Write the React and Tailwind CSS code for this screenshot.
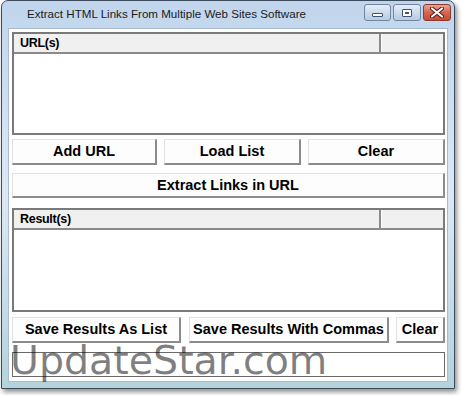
import React from 'react';

const btnFont = { fontFamily: '"Liberation Sans", Arial, sans-serif' };

// flat white buttons with the dark bottom/right edge
const Button = ({ label, className = '' }) => (
  <button
    className={`flex items-center justify-center bg-[#fdfdfd] border-t border-l border-[#e2e2e2] border-r-2 border-b-2 border-r-[#8c8c8c] border-b-[#8c8c8c] text-[14.5px] font-bold text-black leading-none ${className}`}
    style={btnFont}
  >
    {label}
  </button>
);

const ListBox = ({ title, className = '' }) => (
  <div className={`flex flex-col bg-white border-2 border-[#7a7a7a] ${className}`}>
    <div className="flex h-[20px] bg-[#f0f0f0] border-b-2 border-[#8a8a8a]">
      <div
        className="flex items-center w-[367px] pl-[6px] border-r-2 border-[#8a8a8a] text-[12.5px] font-bold text-black tracking-[-0.3px]"
        style={btnFont}
      >
        {title}
      </div>
      <div className="flex-1 border-l border-white" />
    </div>
    <div className="flex-1" />
  </div>
);

const CaptionButtons = () => (
  <div className="flex items-start gap-[2px] pt-[3px]">
    <div className="flex items-end justify-center w-[27px] h-[17px] rounded-[3px] border border-[#6f86a3] bg-gradient-to-b from-[#e6eef8] via-[#cddbeb] to-[#b8cce2] pb-[3px]">
      <div className="w-[11px] h-[4px] bg-white border border-[#3d5370] rounded-[1px]" />
    </div>
    <div className="flex items-center justify-center w-[28px] h-[17px] rounded-[3px] border border-[#6f86a3] bg-gradient-to-b from-[#e6eef8] via-[#cddbeb] to-[#b8cce2]">
      <div className="w-[10px] h-[8px] bg-white border border-[#3d5370] rounded-[1px] flex items-center justify-center">
        <div className="w-[4px] h-[2px] border border-[#3d5370]" />
      </div>
    </div>
    <div className="flex items-center justify-center w-[28px] h-[17px] rounded-[3px] border border-[#8a3b30] bg-gradient-to-b from-[#eba392] via-[#d66450] to-[#c94a34]">
      <svg width="14" height="11" viewBox="0 0 14 11">
        <path d="M2 1.5 L12 9.5 M12 1.5 L2 9.5" stroke="#4a1b14" strokeWidth="4" strokeLinecap="round" />
        <path d="M2 1.5 L12 9.5 M12 1.5 L2 9.5" stroke="#ffffff" strokeWidth="2.2" strokeLinecap="round" />
      </svg>
    </div>
  </div>
);

export default function App() {
  return (
    <div className="w-[463px] h-[395px] bg-white relative overflow-hidden">
      <div className="ml-[1px] w-[454px] h-[389px] flex flex-col rounded-t-[7px] border border-[#3b4c5e] bg-gradient-to-b from-[#c0d5ec] via-[#dde8f4] to-[#b3d3db] shadow-[2px_3px_5px_rgba(0,0,0,0.45)]">
        {/* title bar */}
        <div className="h-[27px] flex justify-between pl-[25px] pr-[3px]">
          <div
            className="pt-[7px] text-[11.6px] text-[#1b1b1b] leading-none"
            style={{ fontFamily: '"Liberation Sans", Arial, sans-serif' }}
          >
            Extract HTML Links From Multiple Web Sites Software
          </div>
          <CaptionButtons />
        </div>

        {/* client area */}
        <div className="mx-[6px] h-[354px] flex flex-col bg-white border border-[#a9bbcf] pl-[3px] pr-[2px] pt-[3px]">
          <ListBox title="URL(s)" className="h-[103px]" />
          <div className="mt-[4px] h-[26px] flex gap-[7px]">
            <Button label="Add URL" className="w-[145px]" />
            <Button label="Load List" className="w-[137px]" />
            <Button label="Clear" className="flex-1" />
          </div>
          <Button label="Extract Links in URL" className="mt-[8px] h-[25px]" />
          <ListBox title="Result(s)" className="mt-[10px] h-[104px]" />
          <div className="mt-[5px] h-[26px] flex">
            <Button label="Save Results As List" className="w-[169px]" />
            <Button label="Save Results With Commas" className="w-[200px] ml-[8px]" />
            <Button label="Clear" className="flex-1 ml-[7px]" />
          </div>
          <div className="mt-[9px] h-[25px] border border-[#6a6a6a] bg-white" />
        </div>
      </div>

      {/* watermark overlay */}
      <div
        className="absolute left-[10px] top-[341px] text-[39.5px] leading-none text-black/50 pointer-events-none"
        style={{ fontFamily: '"DejaVu Sans", Verdana, sans-serif' }}
      >
        UpdateStar.com
      </div>
    </div>
  );
}
